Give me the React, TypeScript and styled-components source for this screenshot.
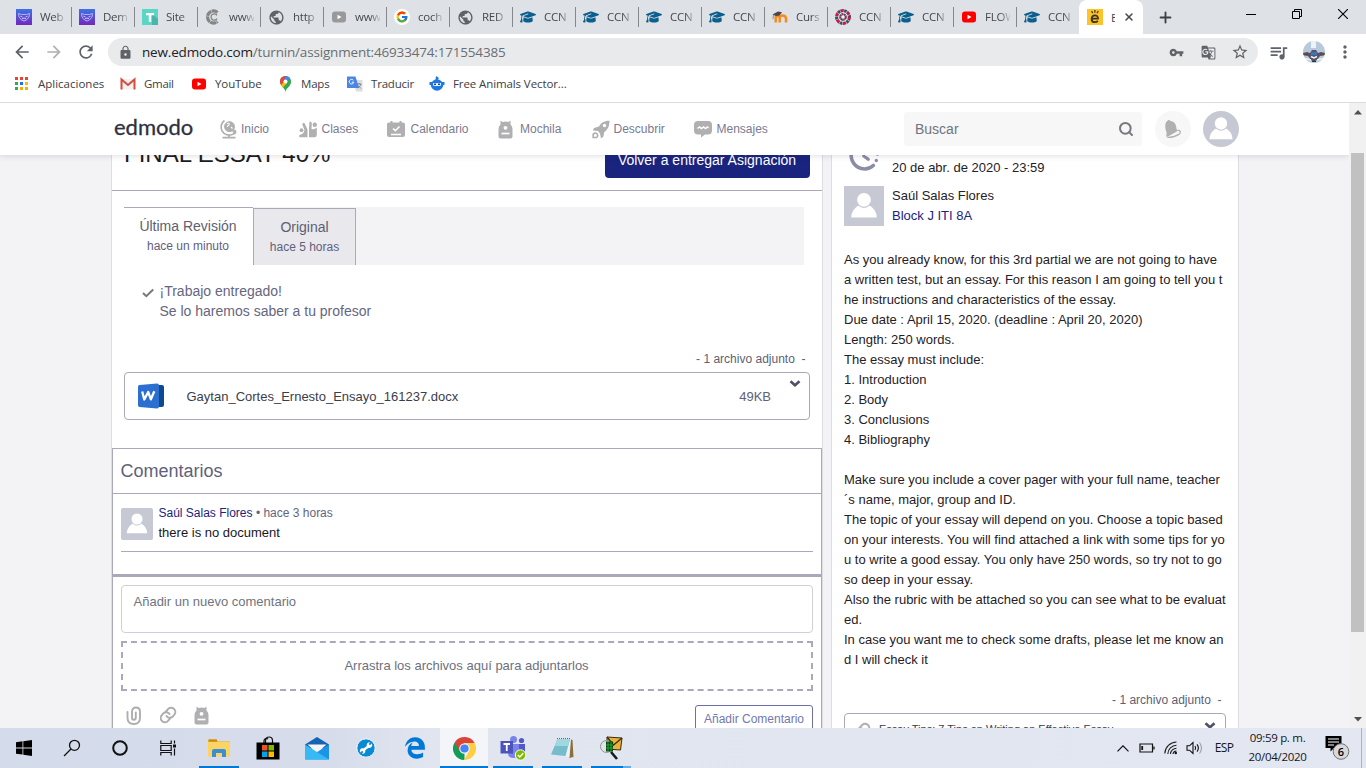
import React from 'react';
import styled, { createGlobalStyle, css } from 'styled-components';
import { Search, X, Plus } from 'lucide-react';
import { FcGoogle } from 'react-icons/fc';
import { FaGraduationCap, FaEdgeLegacy } from 'react-icons/fa6';
import {
  MdArrowBack,
  MdArrowForward,
  MdRefresh,
  MdLock,
  MdVpnKey,
  MdGTranslate,
  MdStarBorder,
  MdMoreVert,
  MdPublic,
  MdQueueMusic,
} from 'react-icons/md';

const uiFont = "'Open Sans', 'Noto Sans', sans-serif";
const pageFont = "'Liberation Sans', Arial, sans-serif";
const line = '#a9a9b9';

const GlobalStyle = createGlobalStyle`
  *, *::before, *::after { box-sizing: border-box; }
  html, body { margin: 0; padding: 0; overflow: hidden; }
  svg { display: block; flex: none; }
`;

const Screen = styled.div`
  width: 1366px;
  height: 768px;
  display: flex;
  flex-direction: column;
  overflow: hidden;
  background: #fff;
  font-family: ${pageFont};
`;

/* ---------- Browser chrome ---------- */

const TabStrip = styled.div`
  height: 34px;
  flex: none;
  display: flex;
  padding-left: 8px;
  background: #dee1e6;
  font-family: ${uiFont};
`;

const Tab = styled.div<{ $first?: boolean }>`
  width: 63px;
  height: 34px;
  padding: 0 6px 0 8px;
  display: flex;
  align-items: center;
  gap: 8px;
  background: ${(p) => (p.$first ? 'none' : 'linear-gradient(#85888c, #85888c) left 7px / 1px 20px no-repeat')};
`;

const TabTitle = styled.span`
  flex: 1;
  overflow: hidden;
  white-space: nowrap;
  font-size: 11.5px;
  line-height: 16px;
  letter-spacing: -0.25px;
  color: #45494d;
  mask-image: linear-gradient(90deg, #000 60%, rgba(0, 0, 0, 0.15));
`;

const ActiveTab = styled.div`
  width: 64px;
  height: 34px;
  padding: 0 8px;
  display: flex;
  align-items: center;
  background: #fff;
  border-radius: 8px 8px 0 0;
  font-size: 11.5px;
  color: #45494d;
  gap: 8px;
`;

const ActiveTitle = styled.span`
  width: 4px;
  overflow: hidden;
`;

const NewTab = styled.div`
  width: 44px;
  display: flex;
  align-items: center;
  justify-content: center;
  color: #3c4043;
`;

const WindowControls = styled.div`
  display: flex;
  margin-left: auto;
  height: 28px;
`;

const WindowButton = styled.div`
  width: 46px;
  display: flex;
  align-items: center;
  justify-content: center;
`;

const Toolbar = styled.div`
  height: 36px;
  flex: none;
  display: flex;
  align-items: center;
  padding-left: 6px;
  color: #5f6368;
`;

const ToolButton = styled.div<{ $faded?: boolean; $w?: number }>`
  width: ${(p) => p.$w ?? 32}px;
  display: flex;
  align-items: center;
  justify-content: center;
  opacity: ${(p) => (p.$faded ? 0.5 : 1)};
`;

const AddressBar = styled.div`
  width: 1150px;
  height: 28px;
  margin-left: 6px;
  padding: 0 2px 0 10px;
  display: flex;
  align-items: center;
  border-radius: 14px;
  background: #e9eaec;
`;

const Url = styled.div`
  flex: 1;
  margin-left: 9px;
  font: 13.5px/20px ${uiFont};
  letter-spacing: -0.18px;
  color: #6a6e73;
  b {
    font-weight: 400;
    color: #202124;
  }
`;

const ProfilePhoto = styled.div`
  width: 22px;
  height: 22px;
  margin: 0 9px 0 5px;
  border-radius: 50%;
  overflow: hidden;
`;

const Bookmarks = styled.div`
  height: 33px;
  flex: none;
  display: flex;
  align-items: center;
  padding: 0 0 5px 14px;
  border-bottom: 1px solid #d9dbdf;
  font-family: ${uiFont};
  font-size: 11.5px;
  line-height: 16px;
  color: #3c4043;
`;

const Bookmark = styled.div<{ $w: number; $gap?: number; $ls?: number }>`
  width: ${(p) => p.$w}px;
  display: flex;
  align-items: center;
  gap: ${(p) => p.$gap ?? 8}px;
  white-space: nowrap;
  letter-spacing: ${(p) => p.$ls ?? 0}px;
`;

/* ---------- Site header ---------- */

const Viewport = styled.div`
  height: 625px;
  flex: none;
  display: flex;
`;

const Page = styled.div`
  width: 1349px;
  display: flex;
  flex-direction: column;
  overflow: hidden;
  background: #f3f3f5;
`;

const Header = styled.header`
  position: relative;
  z-index: 1;
  height: 52px;
  flex: none;
  padding-left: 114px;
  display: flex;
  align-items: center;
  background: #fff;
  box-shadow: 0 1px 6px rgba(60, 60, 80, 0.16);
`;

const Logo = styled.div`
  width: 105px;
  padding-bottom: 5px;
  font: 400 22px/26px Lato, sans-serif;
  -webkit-text-stroke: 0.3px #2f303f;
  color: #2f303f;
`;

const NavItem = styled.div<{ $w: number; $gap: number }>`
  width: ${(p) => p.$w}px;
  display: flex;
  align-items: center;
  gap: ${(p) => p.$gap}px;
  font-size: 12px;
  line-height: 16px;
  color: #7a7b92;
`;

const SearchBox = styled.div`
  width: 238px;
  height: 34px;
  margin-left: auto;
  padding: 0 8px 0 11px;
  display: flex;
  align-items: center;
  justify-content: space-between;
  border-radius: 3px;
  background: #f7f7f7;
  font-size: 14px;
  color: #6f7580;
`;

const BellButton = styled.div`
  width: 36px;
  height: 36px;
  margin: 0 12px 0 13px;
  display: flex;
  align-items: center;
  justify-content: center;
  border-radius: 50%;
  background: #f7f7f7;
`;

const AvatarFrame = styled.div<{ $size: number; $radius: string }>`
  width: ${(p) => p.$size}px;
  height: ${(p) => p.$size}px;
  flex: none;
  overflow: hidden;
  border-radius: ${(p) => p.$radius};
  background: #c6c8d3;
`;

const HeaderAvatar = styled.div`
  margin-right: 110px;
`;

/* ---------- Page body ---------- */

const Columns = styled.main`
  flex: 1;
  min-height: 0;
  display: flex;
  align-items: flex-start;
  gap: 8px;
  padding-left: 111px;
  overflow: hidden;
`;

const cardEdges = css`
  height: 700px;
  flex: none;
  background: #fff;
  border: 1px solid #dddde3;
  border-width: 0 1px;
`;

const MainCard = styled.section`
  ${cardEdges}
  width: 712px;
`;

const SideCard = styled.aside`
  ${cardEdges}
  width: 408px;
  padding-left: 12px;
  color: #1f2126;
  font-size: 13px;
  line-height: 20px;
  white-space: nowrap;
`;

const TitleRow = styled.div`
  height: 51px;
  margin-top: -15px;
  padding: 0 12px;
  display: flex;
  justify-content: space-between;
  border-bottom: 1px solid ${line};
`;

const Title = styled.h1`
  margin: 0;
  font-size: 24px;
  line-height: 28px;
  font-weight: 400;
  color: #1b1c22;
`;

const PrimaryButton = styled.div`
  width: 205px;
  height: 36px;
  margin-top: 2px;
  padding-right: 1px;
  border-radius: 4px;
  background: #1a237e;
  color: #fff;
  font-size: 14px;
  line-height: 37px;
  text-align: center;
`;

const RevisionTabs = styled.div`
  width: 680px;
  height: 58px;
  margin: 16px 0 0 12px;
  display: flex;
  background: #f3f3f5;
`;

const RevisionTab = styled.div<{ $active?: boolean }>`
  width: ${(p) => (p.$active ? 129 : 103)}px;
  height: ${(p) => (p.$active ? 58 : 57)}px;
  margin-top: ${(p) => (p.$active ? 0 : 1)}px;
  padding: 8px ${(p) => (p.$active ? 1 : 0)}px 0 0;
  background: ${(p) => (p.$active ? '#fff' : '#e9e8ed')};
  border: solid ${line};
  border-width: ${(p) => (p.$active ? '1px 0 0' : '1px 1px 0')};
  text-align: center;
  font-size: 14px;
  line-height: 20px;
  color: #5d5f70;
  small {
    display: block;
    font-size: 12px;
    line-height: 20px;
    color: #5f6080;
  }
`;

const Status = styled.div`
  display: flex;
  gap: 5.5px;
  margin: 16px 0 0 30px;
  font-size: 14px;
  line-height: 20px;
  color: #65667f;
  svg {
    margin-top: 7px;
  }
`;

const AttachmentCount = styled.div<{ $top: number; $right: number }>`
  margin: ${(p) => p.$top}px ${(p) => p.$right}px 0 0;
  text-align: right;
  font-size: 12px;
  line-height: 20px;
  color: #5d5f76;
  white-space: pre;
`;

const FileBox = styled.div`
  width: 686px;
  height: 48px;
  margin: 3px 0 0 12px;
  padding: 0 8px 0 12px;
  display: flex;
  align-items: center;
  border: 1px solid ${line};
  border-radius: 4px;
  font-size: 13px;
  color: #3c3d4c;
`;

const FileName = styled.span`
  flex: 1;
  margin-left: 21.5px;
`;

const FileSize = styled.span`
  color: #5f6077;
`;

const FileToggle = styled.div`
  align-self: flex-start;
  margin: 7px 0 0 18px;
`;

const Comments = styled.div`
  width: 710px;
  height: 300px;
  margin-top: 28px;
  border: 1px solid ${line};
`;

const CommentsTitle = styled.h2`
  height: 45px;
  margin: 0;
  padding-left: 7.5px;
  border-bottom: 1px solid ${line};
  font-size: 18px;
  line-height: 44px;
  font-weight: 400;
  color: #60617a;
`;

const CommentList = styled.div`
  height: 83px;
  padding: 0 8px;
  border-bottom: 3px solid ${line};
`;

const Comment = styled.div`
  height: 58px;
  padding-top: 14px;
  display: flex;
  gap: 5.5px;
  border-bottom: 1px solid ${line};
`;

const CommentText = styled.div`
  margin-top: -5px;
  font-size: 13px;
  line-height: 20px;
  color: #17181d;
`;

const CommentMeta = styled.div`
  font-size: 12px;
  color: #63647d;
  b {
    font-weight: 400;
    color: #1a237e;
  }
`;

const CommentInput = styled.div`
  height: 48px;
  margin: 8px 8px 0;
  padding: 7px 11.5px;
  border: 1px solid #ced0dc;
  border-radius: 4px;
  font-size: 13px;
  line-height: 18px;
  color: #70747f;
`;

const DropZone = styled.div`
  height: 50px;
  margin: 8px 8px 0;
  padding-right: 1px;
  border: 2px dashed ${line};
  font-size: 13px;
  line-height: 45px;
  text-align: center;
  color: #6d7080;
`;

const CommentTools = styled.div`
  display: flex;
  align-items: flex-start;
  padding: 14px 8px 0 13px;
  color: #aaaaac;
  svg {
    margin-top: 1px;
  }
`;

const ToolGap = styled.div`
  width: 34px;
`;

const OutlineButton = styled.div`
  width: 118px;
  height: 36px;
  margin-left: auto;
  border: 1px solid #6b70ad;
  border-radius: 3px;
  font-size: 12px;
  line-height: 26px;
  text-align: center;
  color: #7378b0;
`;

const DueRow = styled.div`
  height: 31px;
  display: flex;
  padding-left: 4px;
`;

const DueDate = styled.div`
  margin: 3px 0 0 11px;
`;

const TeacherRow = styled.div`
  height: 64px;
  display: flex;
  gap: 8px;
`;

const GroupLink = styled.div`
  color: #1a237e;
`;

const TextLine = styled.div`
  height: 20px;
  white-space: pre;
`;

const LinkBox = styled.div`
  width: 382px;
  height: 50px;
  margin-top: 3px;
  padding: 5px 9px 0;
  display: flex;
  border: 1px solid ${line};
  border-radius: 4px;
  font-size: 11px;
  line-height: 20px;
  color: #3c3d4c;
  svg {
    margin-top: 3px;
  }
`;

const LinkTitle = styled.div`
  flex: 1;
  margin-left: 7px;
`;

const Scrollbar = styled.div`
  width: 17px;
  display: flex;
  flex-direction: column;
  align-items: center;
  padding: 7px 0 6px;
  background: #f1f1f1;
`;

const Thumb = styled.div`
  width: 13px;
  height: 479px;
  margin: 38px 0 auto;
  background: #c1c1c1;
`;

/* ---------- Taskbar ---------- */

const Taskbar = styled.footer`
  height: 40px;
  flex: none;
  display: flex;
  background: linear-gradient(90deg, #d4dbea 0, #d6dcea 330px, #e1e5f0 430px, #e3e7f2 100%);
  font-family: ${uiFont};
`;

const TaskButton = styled.div<{ $bar?: 'full' | 'short' | 'stack'; $lit?: boolean }>`
  width: 48px;
  height: 40px;
  margin-right: 1px;
  display: flex;
  align-items: center;
  justify-content: center;
  background-color: ${(p) => (p.$lit ? '#f3f5f9' : 'transparent')};
  background-repeat: no-repeat;
  ${(p) =>
    p.$bar === 'full' &&
    css`
      background-image: linear-gradient(#0078d7, #0078d7);
      background-size: 48px 2px;
      background-position: 0 100%;
    `}
  ${(p) =>
    p.$bar === 'short' &&
    css`
      background-image: linear-gradient(#0078d7, #0078d7);
      background-size: 40px 2px;
      background-position: 4px 100%;
    `}
  ${(p) =>
    p.$bar === 'stack' &&
    css`
      background-image: linear-gradient(90deg, #0078d7 32px, #66aee7 32px);
      background-size: 40px 2px;
      background-position: 4px 100%;
    `}
`;

const SystemButtons = styled.div`
  width: 195px;
  display: flex;
  > div {
    margin-right: 0;
  }
`;

const Tray = styled.div`
  margin-left: auto;
  display: flex;
  align-items: center;
  font-size: 11.5px;
  line-height: 19px;
  color: #15161a;
`;

const TrayItem = styled.div<{ $w: number }>`
  width: ${(p) => p.$w}px;
  display: flex;
  justify-content: center;
`;

const Language = styled(TrayItem)`
  font-size: 12px;
  letter-spacing: -0.7px;
  padding-bottom: 1px;
`;

const Clock = styled.div`
  width: 69px;
  padding-bottom: 2px;
  text-align: center;
  letter-spacing: -0.3px;
`;

const ShowDesktop = styled.div`
  width: 5px;
  height: 40px;
  border-left: 1px solid #aeb3bf;
`;

/* ---------- Icons ---------- */

const PurpleMask = () => (
  <svg width="16" height="16" viewBox="0 0 16 16">
    <defs>
      <linearGradient id="mask" x1="0" x2="0" y1="0" y2="1">
        <stop offset="0" stopColor="#3d74e4" />
        <stop offset="1" stopColor="#7327bd" />
      </linearGradient>
    </defs>
    <rect width="16" height="16" fill="url(#mask)" />
    <path d="M2.500 4.500l3 1h5l3-1-.5 3.500-2.500 3-2.500 1-2.500-1-2.500-3z" fill="none" stroke="#b9bdf4" strokeWidth=".9" />
    <path d="M4.500 7.200l2 .8M11.500 7.200l-2 .8M6 9.800l2-.8 2 .8" stroke="#d9dbff" strokeWidth=".9" fill="none" />
  </svg>
);

const TealT = () => (
  <svg width="16" height="16" viewBox="0 0 16 16">
    <path d="M0 0h16v16H0z" fill="#5bd6c4" />
    <path d="M10 5l6 5v6H10z" fill="#46b7a8" />
    <path d="M4 4h8v2.300H9.200V13H6.800V6.300H4z" fill="#fff" />
  </svg>
);

const GrayC = () => (
  <svg width="16" height="16" viewBox="0 0 16 16" fill="none" stroke="#858585">
    <path d="M12.500 3.500A6 6 0 1 0 12.500 12.500" strokeWidth="3.200" strokeDasharray="6 .4" />
    <path d="M12 6.300a3.200 3.200 0 1 0 0 3.400" strokeWidth="1.300" />
  </svg>
);

const Play = ({ color }: { color: string }) => (
  <svg width="16" height="16" viewBox="0 0 16 16">
    <rect x="1" y="2.500" width="14" height="11" rx="3" fill={color} />
    <path d="M6.500 5.700v4.600L10.500 8z" fill="#fff" />
  </svg>
);

const GoogleTab = () => (
  <svg width="16" height="16" viewBox="0 0 16 16">
    <circle cx="8" cy="8" r="8" fill="#fff" />
    <FcGoogle x="1.500" y="1.500" width="13" height="13" size={13} />
  </svg>
);

const Moodle = () => (
  <svg width="16" height="16" viewBox="0 0 16 16" fill="none">
    <path d="M3.700 13.500V9q0-2 2-2t2 2v4.500M7.700 13.500V9q0-2.500 2.800-2.500T14 9v4.500" stroke="#f58a1f" strokeWidth="2.500" />
    <path d="M.5 5.500L6 2.500l4 .8-2.500 3.200L4 7z" fill="#4a4745" />
    <path d="M1.500 5.500L1 10" stroke="#777" strokeWidth=".8" />
  </svg>
);

const RedWheel = () => (
  <svg width="16" height="16" viewBox="0 0 16 16" fill="none">
    <circle cx="8" cy="8" r="8" fill="#f2f3f5" />
    <circle cx="8" cy="8" r="6.400" stroke="#c3203f" strokeWidth="3.200" strokeDasharray="3.400 3.300" />
    <circle cx="8" cy="8" r="6.400" stroke="#25596f" strokeWidth="3.200" strokeDasharray="2.500 4.200" strokeDashoffset="-3.800" />
    <circle cx="8" cy="8" r="2.800" stroke="#25596f" strokeWidth="2.200" strokeDasharray="2.200 2.200" />
    <circle cx="8" cy="8" r="2.800" stroke="#c3203f" strokeWidth="2.200" strokeDasharray="1.700 2.700" strokeDashoffset="-2.400" />
  </svg>
);

const EdmodoTab = () => (
  <svg width="16" height="16" viewBox="0 0 16 16" fill="none" stroke="#3a3426">
    <path d="M0 0h16v16H0z" fill="#fdc429" stroke="none" />
    <path d="M4.700 9.700h6.300c.2-2-1.200-3.400-3.100-3.400-2 0-3.300 1.500-3.300 3.600s1.400 3.300 3.300 3.300c1.200 0 2.200-.4 2.900-1.300" strokeWidth="1.800" />
    <path d="M4.500 2.200l1.300 2M7.900 1v2.700M11.300 2.200L10 4.200" strokeWidth="1.200" />
  </svg>
);

const AppsGrid = () => (
  <svg width="15" height="15" viewBox="0 0 15 15">
    {['#ea4335', '#ea4335', '#ea4335', '#34a853', '#1a73e8', '#fbbc05', '#34a853', '#f9ab00', '#f9ab00'].map((c, i) => (
      <rect key={i} x={1 + (i % 3) * 5} y={1 + Math.floor(i / 3) * 5} width="3" height="3" fill={c} />
    ))}
  </svg>
);

const Gmail = () => (
  <svg width="16" height="16" viewBox="0 0 16 16" fill="none">
    <path d="M1 3h14v10.500H1z" fill="#f3f0f0" />
    <path d="M1.500 13.500V3.500L8 9l6.500-5.500v10" stroke="#d54b3d" strokeWidth="2" />
  </svg>
);

const MapPin = () => (
  <svg width="13" height="16" viewBox="0 0 13 16">
    <path d="M6.500 16C6 12 1 10 1 5.500a5.500 5.500 0 0 1 11 0C12 10 7 12 6.500 16z" fill="#34a853" />
    <path d="M2.300 9L9 1C4 -1 1 2 1 5.500 1 7 1.500 8 2.300 9z" fill="#ea4335" />
    <path d="M2.500 9.200L10.500 2 12 5.500C11.500 9 10 10 8.500 12z" fill="#34a853" />
    <path d="M2.200 9L5 5.500 8 7 4 11.400z" fill="#fbbc05" />
    <path d="M7.500.2L4.500 4 9 4.500l2.200-2C10.500 1 9 .3 7.500.2z" fill="#4285f4" />
    <circle cx="6.500" cy="5.500" r="2" fill="#fff" />
  </svg>
);

const Translate = () => (
  <svg width="16" height="16" viewBox="0 0 16 16">
    <path d="M6 4h9.500v11.500H9z" fill="#dcdee2" />
    <path d="M0 .5h8.500L12 12H0z" fill="#4a86e8" />
    <path d="M6.300 4.200A2.300 2.300 0 1 0 6.800 6.200H4.800" stroke="#fff" fill="none" />
    <path d="M10 8h4.500M12.200 7v1M14 8c-.5 2-2 3-3.500 4M11 9.500l3 3" stroke="#6d7580" strokeWidth=".8" fill="none" />
  </svg>
);

const RobotBlue = () => (
  <svg width="16" height="16" viewBox="0 0 16 16">
    <path d="M7 0l3 2-1.500 2h-2zM.500 6h15v3H14.300A6.500 6 0 0 1 1.700 9H.5z" fill="#1c78e5" />
    <ellipse cx="8" cy="9" rx="6" ry="5.800" fill="#1c78e5" />
    <path d="M4 7h8v2.500q-4 1-8 0z" fill="#e7f1fd" />
    <path d="M5 7.500h2v1.500H5zM9 7.500h2v1.500H9z" fill="#134f9c" />
  </svg>
);

const Globe = () => (
  <svg width="19" height="20" viewBox="0 0 19 20" fill="none" stroke="#b0b0b2">
    <circle cx="10.500" cy="7.700" r="5" fill="#b0b0b2" />
    <path d="M5.500 1.500A8 8 0 0 0 13 15.500q2.500-.5 4-2" strokeWidth="1.700" />
    <path d="M8 4.500q3-1 2 1.500l-2 1.500M12 8l1.500 1.500" stroke="#fff" strokeWidth="1.100" />
    <path d="M10 15.500v3M3.500 18.700h13" strokeWidth="1.700" />
    <circle cx="15.500" cy="12.500" r="1.500" fill="#b0b0b2" />
  </svg>
);

const People = () => (
  <svg width="18" height="18" viewBox="0 0 18 18" fill="#b0b0b2">
    <circle cx="2.500" cy="10.200" r="1.900" />
    <path d="M.300 17.300V15q3-.5 4.200-2.200L5.500 10 3.300 4.500Q3.500 2.500 5.300 2.700L8.500 9.500V17.300z" />
    <path d="M10 17.300V8.500L10.500 1.500q2.200-.2 2.300 1.500L12.500 9q3 1 5.300-1.500v7.500q0 2.300-2.500 2.300z" />
    <circle cx="15.800" cy="4.800" r="2.200" />
  </svg>
);

const CalendarCheck = () => (
  <svg width="18" height="18" viewBox="0 0 18 18">
    <path d="M2 2.500h1.500V1h2v1.500h7V1h2v1.500H16q2 0 2 2V15q0 2-2 2H2q-2 0-2-2V4.500q0-2 2-2z" fill="#b0b0b2" />
    <path d="M6 8.500l2.300 2.200L12.500 6.500M4 14.500h10" stroke="#fff" strokeWidth="1.600" fill="none" />
  </svg>
);

const Backpack = () => (
  <svg width="15" height="19" viewBox="0 0 15 19">
    <path d="M2.500.5L4.500 2q3-.8 6 0l2-1.500V4.500Q14.500 6 14.500 9v7.500q0 2-2 2h-10q-2 0-2-2V9q0-3 2-4.500z" fill="#b0b0b2" />
    <circle cx="7.500" cy="7.800" r="1.900" fill="#fff" />
    <path d="M3.500 13.500h8" stroke="#fff" strokeWidth="1.700" />
  </svg>
);

const Rocket = () => (
  <svg width="18" height="19" viewBox="0 0 18 19" fill="none">
    <path d="M17.500.8C12 .8 9 3 7 6.500L2 8 .8 10.500 6 11l2 2.500L9 18.500l2.500-2L12 12.500C16 9.500 17.500 6 17.500.8z" fill="#b0b0b2" />
    <circle cx="12.500" cy="5.500" r="1.700" fill="#fff" />
    <path d="M1.200 17.500v-3.300A2.400 2.400 0 1 1 4.500 17.500z" stroke="#b0b0b2" strokeWidth="1.700" />
  </svg>
);

const MessageBubble = () => (
  <svg width="18" height="18" viewBox="0 0 18 18">
    <path d="M4 1h10q4 0 4 4v5.500q0 4-4 4h-3L7 17.500v-3H4q-4 0-4-4V5q0-4 4-4z" fill="#b0b0b2" />
    <path d="M3.500 8.500l2-1.500 2 1.500 2-1.500 2 1.500 2-1.500 1 .8" stroke="#fff" strokeWidth="1.500" fill="none" />
  </svg>
);

const Bell = () => (
  <svg width="18" height="20" viewBox="0 0 18 20">
    <path d="M2 3.200L3.500 1.800 4.800.8 6.500 2q4.500.7 5.500 5l.7 3.500 1 1.500L4 17.500l-1.800.3.500-4Q.2 8 2 3.200z" fill="#b0b0b2" />
    <path d="M13.500 11.200c3 .2 4 2.300 1.300 4.200-3.300 2.200-7.500 3.200-11.500 3" fill="none" stroke="#b0b0b2" strokeWidth="1.300" />
  </svg>
);

const Person = ({ size }: { size: number }) => (
  <svg width={size} height={size} viewBox="0 0 40 40" fill="#fff">
    <path d="M7.200 31.500q.3-8.300 8-12.500h9.600q7.700 4.200 8 12.500z" />
    <circle cx="20" cy="13.800" r="7.500" stroke="#c6c8d3" strokeWidth="1.200" />
  </svg>
);

const DueClock = () => (
  <svg width="33" height="22" viewBox="0 0 33 22" fill="none" stroke="#8b8da6" strokeWidth="3.600" strokeLinecap="round">
    <path d="M16.500 -12.500A13.200 13.200 0 1 0 25.300 10.500" />
    <path d="M15.800 -6v7l4.400 3.300" strokeWidth="3.200" />
    <path d="M28.300 5.500v.1M29.500 -1v.1" strokeWidth="3.400" />
  </svg>
);

const CheckMark = () => (
  <svg width="12" height="10" viewBox="0 0 12 10" fill="none" stroke="#77787c" strokeWidth="2">
    <path d="M1 5l3.300 3.200L11.200 1.500" />
  </svg>
);

const ChevronMark = () => (
  <svg width="12" height="8" viewBox="0 0 12 8" fill="none" stroke="#4f5264" strokeWidth="2.600">
    <path d="M1.500 1.200L6 5.300l4.500-4.100" />
  </svg>
);

const WordIcon = () => (
  <svg width="28" height="26" viewBox="0 0 28 26">
    <path d="M18 2h7q2 0 2 2v18q0 2-2 2h-7z" fill="#0d4a8f" />
    <path d="M2.500 2L20 .5q2 0 2 2v21q0 2-2 2L2.500 24Q1 24 1 22V4q0-2 1.500-2z" fill="#2b6fd0" />
    <path d="M5.200 8.500l2.100 8L11.200 9l2.700 7.300 3.400-8" fill="none" stroke="#fff" strokeWidth="2.300" strokeLinejoin="round" />
  </svg>
);

const ClipIcon = () => (
  <svg width="18" height="20" viewBox="0 0 18 20" fill="none" stroke="#aeaeb0" strokeWidth="1.900" strokeLinecap="round">
    <path d="M1.500 6v5.500Q1.500 18 7.800 18T14 11.500V6Q14 1.500 10 1.500T6 6v5.500q0 2.300 1.900 2.300T9.800 11.500V6.500" />
  </svg>
);

const ChainIcon = () => (
  <svg width="18" height="18" viewBox="0 0 18 18" fill="none" stroke="#aeaeb0" strokeWidth="2" strokeLinecap="round">
    <path d="M6 5.500l2-2.300a4.200 4.200 0 0 1 6.500 5.300l-2 2.300A4 4 0 0 1 6.500 10" />
    <path d="M10 12.500l-2 2.300A4.200 4.200 0 0 1 1.500 9.500l2-2.300A4 4 0 0 1 9.500 8" />
  </svg>
);

const TaskSearch = () => (
  <svg width="18" height="18" viewBox="0 0 18 18" fill="none" stroke="#111" strokeWidth="1.300">
    <circle cx="11.500" cy="6.300" r="5" />
    <path d="M8 10l-7 7" />
  </svg>
);

const WindowsLogo = () => (
  <svg width="16" height="16" viewBox="0 0 16 16">
    <path d="M0 2.300L6.500 1.300v6.200H0zM7.300 1.200L16 0v7.500H7.300zM0 8.400h6.500v6.200L0 13.700zM7.300 8.400H16V16l-8.700-1.200z" />
  </svg>
);

const TaskView = () => (
  <svg width="17" height="16" viewBox="0 0 17 16" fill="none" stroke="#111" strokeWidth="1.200">
    <path d="M.8.500v3h10.400v-3M.8 15.500v-3h10.400v3M.8 5.500h10.400v5H.8zM14.500.500v3M14.500 8.500v7" />
    <path d="M13 4.500h3v3h-3z" fill="#111" stroke="none" />
  </svg>
);

const Folder = () => (
  <svg width="22" height="20" viewBox="0 0 22 20">
    <path d="M0 1.500h8l2 2H22V17H0z" fill="#e8a921" />
    <path d="M1 1.500h8v2H1z" fill="#c98a0c" />
    <path d="M0 4h22v14.500H0z" fill="#fcd462" />
    <path d="M4 18.500V13q0-2 2-2h10q2 0 2 2v6h-4v-4H8v4H4z" fill="#3a8ed6" />
  </svg>
);

const Store = () => (
  <svg width="24" height="24" viewBox="0 0 24 24">
    <path d="M8 7V4.500a2.500 2.500 0 0 1 4-1.500M9.500 7V4.500a3.500 3.500 0 0 1 7 0V7" fill="none" stroke="#111" strokeWidth="1.200" />
    <path d="M.500 6.500h23v17h-23z" fill="#000" />
    <path d="M6 9h5.500v5.500H6z" fill="#f25022" />
    <path d="M12.500 9H18v5.500h-5.500z" fill="#7fba00" />
    <path d="M6 15.500h5.500V21H6z" fill="#00a4ef" />
    <path d="M12.500 15.500H18V21h-5.500z" fill="#ffb900" />
  </svg>
);

const Mail = () => (
  <svg width="24" height="24" viewBox="0 0 24 24">
    <path d="M0 8.500L12 1l12 7.500v4H0z" fill="#1463b5" />
    <path d="M2.500 8.500h19L12 17z" fill="#f5f5f5" />
    <path d="M24 8.500V23.500H0l13-8z" fill="#1a94e6" />
    <path d="M0 8.500l24 15H0z" fill="#37baf3" />
  </svg>
);

const WrenchCircle = () => (
  <svg width="20" height="20" viewBox="0 0 20 20">
    <circle cx="10" cy="10" r="9.200" fill="#0a8ad2" stroke="#f3f8fc" strokeWidth="1" />
    <path d="M6.500 12.800l7-5.300" stroke="#fff" strokeWidth="2.400" />
    <path
      d="M15.800 5.600l-1.900 1.700-1.300-1.200 1.500-1.700a2.800 2.800 0 1 0 1.700 1.200zM4.200 14.500l1.900-1.700 1.300 1.200-1.500 1.700A2.800 2.800 0 1 0 4.200 14.500z"
      fill="#fff"
    />
  </svg>
);

const Chrome = () => (
  <svg width="23" height="23" viewBox="0 0 24 24">
    <path d="M12 12v12A12 12 0 0 1 1.600 6z" fill="#0f9d58" />
    <path d="M12 6.500h10.700L22.400 6A12 12 0 0 0 1.600 6L7.200 15z" fill="#db4437" />
    <path d="M16.800 14.700L11.500 24H12A12 12 0 0 0 22.700 6.500H12z" fill="#ffcd40" />
    <circle cx="12" cy="12" r="5.500" fill="#f1f1f1" />
    <circle cx="12" cy="12" r="4.300" fill="#4285f4" />
  </svg>
);

const Teams = () => (
  <svg width="26" height="26" viewBox="0 0 26 26">
    <circle cx="13.500" cy="4.500" r="3.500" fill="#7b83eb" />
    <circle cx="21.500" cy="5.500" r="2.600" fill="#5059c9" />
    <path d="M18 9h7v8q0 4-4 4l-3-1z" fill="#5059c9" />
    <path d="M8 9h11v9q0 5-5.500 5T8 18z" fill="#7b83eb" />
    <path d="M.500 6h12.500v12.500H.500z" fill="#4b53bc" />
    <path d="M3.500 9h6.500M6.750 9v7" stroke="#fff" strokeWidth="1.800" />
    <circle cx="20.500" cy="20" r="5.200" fill="#7fba00" stroke="#fff" />
    <path d="M17.800 20l2 2 3.500-3.700" fill="none" stroke="#fff" strokeWidth="1.500" />
  </svg>
);

const Notepad = () => (
  <svg width="24" height="24" viewBox="0 0 24 24">
    <path d="M20 3l2.500 1L23.500 21 19 22z" fill="#8d6e3c" />
    <path d="M7 3h14l-1.500 18.500L14 20z" fill="#e9f2f4" />
    <path d="M7.500 3H20L15.500 20 1 18.500z" fill="#76bccb" />
    <path d="M7.500 3H20l-2 7L4.500 10z" fill="#a0d7e0" />
    <path d="M7 2.500h14" stroke="#5a6d75" strokeWidth="1.200" strokeDasharray="1 1" />
  </svg>
);

const MailSearch = () => (
  <svg width="24" height="26" viewBox="0 0 24 26">
    <path d="M8 2l15 1-1.500 12L8 14z" fill="#e9b23b" stroke="#3c2c0d" />
    <path d="M8 2l6.500 8L23 3" fill="none" stroke="#3c2c0d" strokeWidth="1.300" />
    <circle cx="7.500" cy="11.500" r="6" fill="#dfe6e4" stroke="#8d9697" />
    <path d="M7 6.500h7v10H7z" fill="#0c3a12" />
    <path d="M9 7v9M12 7v9M7 10h7M7 13h7" stroke="#21c43c" strokeWidth=".8" />
    <path d="M12 17l6 7" stroke="#17191b" strokeWidth="2.600" />
  </svg>
);

const Battery = () => (
  <svg width="16" height="10" viewBox="0 0 16 10" fill="none" stroke="#111" strokeWidth="1.200">
    <path d="M1 1h12.500v8H1zM15 3.500v3" />
    <path d="M3.200 3v4" strokeWidth="1.800" />
  </svg>
);

const Wifi = () => (
  <svg width="14" height="14" viewBox="0 0 14 14" fill="none" stroke="#222" strokeWidth="1.100">
    <path d="M.800 12.500A12 12 0 0 1 12.500 1M3.800 13A9 9 0 0 1 12.500 4.200M6.500 13A6 6 0 0 1 12.500 7.300M9 13a3.500 3.500 0 0 1 3.500-3" />
    <circle cx="11.800" cy="12" r="1.200" fill="#111" stroke="none" />
  </svg>
);

const Volume = () => (
  <svg width="17" height="14" viewBox="0 0 17 14" fill="none" stroke="#111" strokeWidth="1.100">
    <path d="M1 4.800h2.500L7 1.500v11L3.500 9.200H1z" />
    <path d="M9 5q1.300 2 0 4M11 3.300q2.800 3.700 0 7.400" />
    <path d="M13.500 1.500q4 5.500 0 11" stroke="#9aa0aa" />
  </svg>
);

const Notification = () => (
  <svg width="26" height="26" viewBox="0 0 26 26">
    <path d="M1.500 1h16v12H10L6.500 16.500V13h-5z" fill="#000" />
    <path d="M4 4h11M4 7h11M4 10h6" stroke="#fff" strokeWidth="1.100" />
    <circle cx="17" cy="16.500" r="7.800" fill="#d6d8dc" stroke="#6f7278" />
    <text x="17" y="20.500" textAnchor="middle" fontSize="11" fontWeight="600" fontFamily="Open Sans, sans-serif">
      6
    </text>
  </svg>
);

const ProfileArt = () => (
  <svg width="22" height="22" viewBox="0 0 22 22">
    <path d="M0 0h22v22H0z" fill="#b7c9da" />
    <path d="M8 0h5v7H8z" fill="#eef3f7" />
    <path d="M0 12l4-1 3 1 2-3h4l2 3 3-1 4 1v2l-5 1-3 4-3 1-3-1-3-4-5-1z" fill="#55556a" />
    <path d="M8 11h6v3H8z" fill="#3d74b8" />
    <path d="M1 13.500h4M17 13.500h4" stroke="#7f3a35" strokeWidth="1.300" />
    <path d="M2 17.500l6 1.500M20 17.500l-6 1.500M8 15.500l3 1.500 3-1.500" stroke="#f2f2f2" strokeWidth="1.500" fill="none" />
    <path d="M9 19.500h4v1.500H9z" fill="#33333d" />
  </svg>
);

/* ---------- Data ---------- */

const cap = <FaGraduationCap size={16} color="#0b5f8d" />;
const world = <MdPublic size={17} color="#5f6368" />;

const tabs: { icon: React.ReactNode; title: string }[] = [
  { icon: <PurpleMask />, title: 'Web' },
  { icon: <PurpleMask />, title: 'Dem' },
  { icon: <TealT />, title: 'Site' },
  { icon: <GrayC />, title: 'www' },
  { icon: world, title: 'http' },
  { icon: <Play color="#999" />, title: 'www' },
  { icon: <GoogleTab />, title: 'coch' },
  { icon: world, title: 'RED' },
  { icon: cap, title: 'CCN' },
  { icon: cap, title: 'CCN' },
  { icon: cap, title: 'CCN' },
  { icon: cap, title: 'CCN' },
  { icon: <Moodle />, title: 'Curs' },
  { icon: <RedWheel />, title: 'CCN' },
  { icon: cap, title: 'CCN' },
  { icon: <Play color="#f00" />, title: 'FLOW' },
  { icon: cap, title: 'CCN' },
];

const description = [
  'As you already know, for this 3rd partial we are not going to have',
  'a written test, but an essay. For this reason I am going to tell you t',
  'he instructions and characteristics of the essay.',
  'Due date : April 15, 2020. (deadline : April 20, 2020)',
  'Length: 250 words.',
  'The essay must include:',
  '1. Introduction',
  '2. Body',
  '3. Conclusions',
  '4. Bibliography',
  '',
  'Make sure you include a cover pager with your full name, teacher',
  '´s name, major, group and ID.',
  'The topic of your essay will depend on you. Choose a topic based',
  'on your interests. You will find attached a link with some tips for yo',
  'u to write a good essay. You only have 250 words, so try not to go',
  'so deep in your essay.',
  'Also the rubric with be attached so you can see what to be evaluat',
  'ed.',
  'In case you want me to check some drafts, please let me know an',
  'd I will check it',
];

const Avatar = ({ size, radius = '0' }: { size: number; radius?: string }) => (
  <AvatarFrame $size={size} $radius={radius}>
    <Person size={size} />
  </AvatarFrame>
);

/* ---------- Sections ---------- */

const BrowserChrome = () => (
  <>
    <TabStrip>
      {tabs.map((t, i) => (
        <Tab key={i} $first={i === 0}>
          {t.icon}
          <TabTitle>{t.title}</TabTitle>
        </Tab>
      ))}
      <ActiveTab>
        <EdmodoTab />
        <ActiveTitle>E</ActiveTitle>
        <X size={12} strokeWidth={3} />
      </ActiveTab>
      <NewTab>
        <Plus size={17} strokeWidth={2.6} />
      </NewTab>
      <WindowControls>
        <WindowButton>
          <svg width="10" height="10" stroke="#000">
            <path d="M0 5.500h10" />
          </svg>
        </WindowButton>
        <WindowButton>
          <svg width="10" height="10" stroke="#000" fill="none">
            <path d="M.5 2.500h7v7h-7zM2.500 2.500v-2h7v7h-2" />
          </svg>
        </WindowButton>
        <WindowButton>
          <svg width="10" height="10" stroke="#000" strokeWidth="1.100">
            <path d="M0 0l10 10M10 0L0 10" />
          </svg>
        </WindowButton>
      </WindowControls>
    </TabStrip>
    <Toolbar>
      <ToolButton>
        <MdArrowBack size={20} />
      </ToolButton>
      <ToolButton $faded>
        <MdArrowForward size={20} />
      </ToolButton>
      <ToolButton>
        <MdRefresh size={20} />
      </ToolButton>
      <AddressBar>
        <MdLock size={15} />
        <Url>
          <b>new.edmodo.com</b>/turnin/assignment:46933474:171554385
        </Url>
        <ToolButton>
          <MdVpnKey size={15} />
        </ToolButton>
        <ToolButton>
          <MdGTranslate size={15} />
        </ToolButton>
        <ToolButton>
          <MdStarBorder size={18} />
        </ToolButton>
      </AddressBar>
      <ToolButton $w={40}>
        <MdQueueMusic size={21} />
      </ToolButton>
      <ProfilePhoto>
        <ProfileArt />
      </ProfilePhoto>
      <ToolButton $w={22}>
        <MdMoreVert size={20} />
      </ToolButton>
    </Toolbar>
    <Bookmarks>
      <Bookmark $w={106} $gap={9}>
        <AppsGrid />
        Aplicaciones
      </Bookmark>
      <Bookmark $w={71} $ls={-0.3}>
        <Gmail />
        Gmail
      </Bookmark>
      <Bookmark $w={88} $ls={-0.1}>
        <Play color="#f00" />
        YouTube
      </Bookmark>
      <Bookmark $w={68} $gap={9} $ls={-0.2}>
        <MapPin />
        Maps
      </Bookmark>
      <Bookmark $w={82} $ls={-0.2}>
        <Translate />
        Traducir
      </Bookmark>
      <Bookmark $w={150} $ls={-0.1}>
        <RobotBlue />
        Free Animals Vector...
      </Bookmark>
    </Bookmarks>
  </>
);

const SiteHeader = () => (
  <Header>
    <Logo>edmodo</Logo>
    <NavItem $w={80} $gap={3}>
      <Globe />
      Inicio
    </NavItem>
    <NavItem $w={88} $gap={4.5}>
      <People />
      Clases
    </NavItem>
    <NavItem $w={111} $gap={5.5}>
      <CalendarCheck />
      Calendario
    </NavItem>
    <NavItem $w={94} $gap={7}>
      <Backpack />
      Mochila
    </NavItem>
    <NavItem $w={102} $gap={3.5}>
      <Rocket />
      Descubrir
    </NavItem>
    <NavItem $w={100} $gap={4.5}>
      <MessageBubble />
      Mensajes
    </NavItem>
    <SearchBox>
      Buscar
      <Search size={16} strokeWidth={3} color="#77797d" />
    </SearchBox>
    <BellButton>
      <Bell />
    </BellButton>
    <HeaderAvatar>
      <Avatar size={36} radius="50%" />
    </HeaderAvatar>
  </Header>
);

const Submission = () => (
  <MainCard>
    <TitleRow>
      <Title>FINAL ESSAY 40%</Title>
      <PrimaryButton>Volver a entregar Asignación</PrimaryButton>
    </TitleRow>
    <RevisionTabs>
      <RevisionTab $active>
        Última Revisión
        <small>hace un minuto</small>
      </RevisionTab>
      <RevisionTab>
        Original
        <small>hace 5 horas</small>
      </RevisionTab>
    </RevisionTabs>
    <Status>
      <CheckMark />
      <div>
        ¡Trabajo entregado!
        <br />
        Se lo haremos saber a tu profesor
      </div>
    </Status>
    <AttachmentCount $top={28} $right={16.5}>
      {'- 1 archivo adjunto  -'}
    </AttachmentCount>
    <FileBox>
      <WordIcon />
      <FileName>Gaytan_Cortes_Ernesto_Ensayo_161237.docx</FileName>
      <FileSize>49KB</FileSize>
      <FileToggle>
        <ChevronMark />
      </FileToggle>
    </FileBox>
    <Comments>
      <CommentsTitle>Comentarios</CommentsTitle>
      <CommentList>
        <Comment>
          <Avatar size={32} radius="2px" />
          <CommentText>
            <CommentMeta>
              <b>Saúl Salas Flores</b> • hace 3 horas
            </CommentMeta>
            there is no document
          </CommentText>
        </Comment>
      </CommentList>
      <CommentInput>Añadir un nuevo comentario</CommentInput>
      <DropZone>Arrastra los archivos aquí para adjuntarlos</DropZone>
      <CommentTools>
        <ToolGap>
          <ClipIcon />
        </ToolGap>
        <ToolGap>
          <ChainIcon />
        </ToolGap>
        <ToolGap>
          <Backpack />
        </ToolGap>
        <OutlineButton>Añadir Comentario</OutlineButton>
      </CommentTools>
    </Comments>
  </MainCard>
);

const AssignmentDetails = () => (
  <SideCard>
    <DueRow>
      <DueClock />
      <DueDate>20 de abr. de 2020 - 23:59</DueDate>
    </DueRow>
    <TeacherRow>
      <Avatar size={40} />
      <div>
        Saúl Salas Flores
        <GroupLink>Block J ITI 8A</GroupLink>
      </div>
    </TeacherRow>
    {description.map((text, i) => (
      <TextLine key={i}>{text}</TextLine>
    ))}
    <AttachmentCount $top={20} $right={16.5}>
      {'- 1 archivo adjunto  -'}
    </AttachmentCount>
    <LinkBox>
      <ChainIcon />
      <LinkTitle>Essay Tips: 7 Tips on Writing an Effective Essay</LinkTitle>
      <ChevronMark />
    </LinkBox>
  </SideCard>
);

const WindowsTaskbar = () => (
  <Taskbar>
    <SystemButtons>
      <TaskButton>
        <WindowsLogo />
      </TaskButton>
      <TaskButton>
        <TaskSearch />
      </TaskButton>
      <TaskButton>
        <svg width="18" height="18" viewBox="0 0 18 18">
          <circle cx="9" cy="9" r="6.800" fill="none" stroke="#111" strokeWidth="2" />
        </svg>
      </TaskButton>
      <TaskButton>
        <TaskView />
      </TaskButton>
    </SystemButtons>
    <TaskButton $bar="short">
      <Folder />
    </TaskButton>
    <TaskButton>
      <Store />
    </TaskButton>
    <TaskButton>
      <Mail />
    </TaskButton>
    <TaskButton>
      <WrenchCircle />
    </TaskButton>
    <TaskButton>
      <FaEdgeLegacy size={22} color="#0078d7" />
    </TaskButton>
    <TaskButton $bar="full" $lit>
      <Chrome />
    </TaskButton>
    <TaskButton $bar="short">
      <Teams />
    </TaskButton>
    <TaskButton $bar="short">
      <Notepad />
    </TaskButton>
    <TaskButton $bar="stack">
      <MailSearch />
    </TaskButton>
    <Tray>
      <TrayItem $w={24}>
        <svg width="12" height="7" viewBox="0 0 12 7" fill="none" stroke="#111" strokeWidth="1.200">
          <path d="M.5 6.300L6 .8l5.500 5.500" />
        </svg>
      </TrayItem>
      <TrayItem $w={24}>
        <Battery />
      </TrayItem>
      <TrayItem $w={24}>
        <Wifi />
      </TrayItem>
      <TrayItem $w={22}>
        <Volume />
      </TrayItem>
      <Language $w={38}>ESP</Language>
      <Clock>
        09:59 p. m.
        <br />
        20/04/2020
      </Clock>
      <TrayItem $w={49}>
        <Notification />
      </TrayItem>
      <ShowDesktop />
    </Tray>
  </Taskbar>
);

export default function App() {
  return (
    <Screen>
      <GlobalStyle />
      <BrowserChrome />
      <Viewport>
        <Page>
          <SiteHeader />
          <Columns>
            <Submission />
            <AssignmentDetails />
          </Columns>
        </Page>
        <Scrollbar>
          <svg width="8" height="5" fill="#505050">
            <path d="M4 0l4 4.500H0z" />
          </svg>
          <Thumb />
          <svg width="8" height="5" fill="#505050">
            <path d="M0 0h8L4 4.500z" />
          </svg>
        </Scrollbar>
      </Viewport>
      <WindowsTaskbar />
    </Screen>
  );
}
